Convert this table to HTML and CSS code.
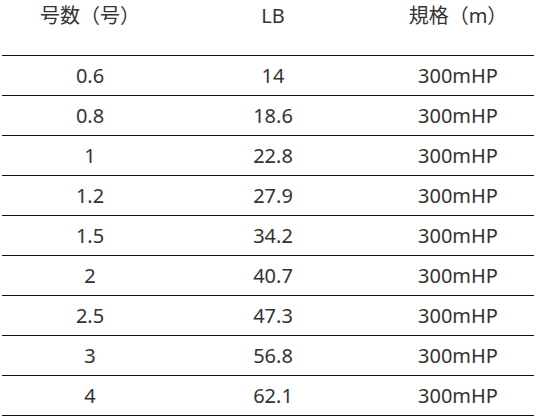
FILE: index.html
```html
<!DOCTYPE html>
<html lang="ja">
<head>
<meta charset="utf-8">
<title>号数表</title>
<link rel="stylesheet" href="styles.css">
</head>
<body>
<div class="table">
  <div class="row head">
    <div class="cell">号数（号）</div>
    <div class="cell">LB</div>
    <div class="cell c3">規格（m）</div>
  </div>
  <div class="row"><div class="cell">0.6</div><div class="cell">14</div><div class="cell c3">300mHP</div></div>
  <div class="row"><div class="cell">0.8</div><div class="cell">18.6</div><div class="cell c3">300mHP</div></div>
  <div class="row"><div class="cell">1</div><div class="cell">22.8</div><div class="cell c3">300mHP</div></div>
  <div class="row"><div class="cell">1.2</div><div class="cell">27.9</div><div class="cell c3">300mHP</div></div>
  <div class="row"><div class="cell">1.5</div><div class="cell">34.2</div><div class="cell c3">300mHP</div></div>
  <div class="row"><div class="cell">2</div><div class="cell">40.7</div><div class="cell c3">300mHP</div></div>
  <div class="row"><div class="cell">2.5</div><div class="cell">47.3</div><div class="cell c3">300mHP</div></div>
  <div class="row"><div class="cell">3</div><div class="cell">56.8</div><div class="cell c3">300mHP</div></div>
  <div class="row last"><div class="cell">4</div><div class="cell">62.1</div><div class="cell c3">300mHP</div></div>
</div>
</body>
</html>
```
FILE: styles.css
```css
html, body {
  margin: 0;
  padding: 0;
  background: #ffffff;
}
body {
  font-family: "Noto Sans", "Noto Sans CJK JP", sans-serif;
  font-size: 20px;
  color: #333333;
}
.table {
  width: 532px;
  margin-left: 2px;
}
.row {
  display: grid;
  grid-template-columns: 176px 190px 166px;
  height: 39px;
  border-top: 1px solid #111111;
}
.row.head {
  height: 55px;
  border-top: none;
}
.row.last {
  border-bottom: 1px solid #111111;
}
.cell {
  text-align: center;
  line-height: 39px;
  white-space: nowrap;
}
.head .cell {
  line-height: 31px;
}
.c3 {
  padding-left: 14px;
}
```
